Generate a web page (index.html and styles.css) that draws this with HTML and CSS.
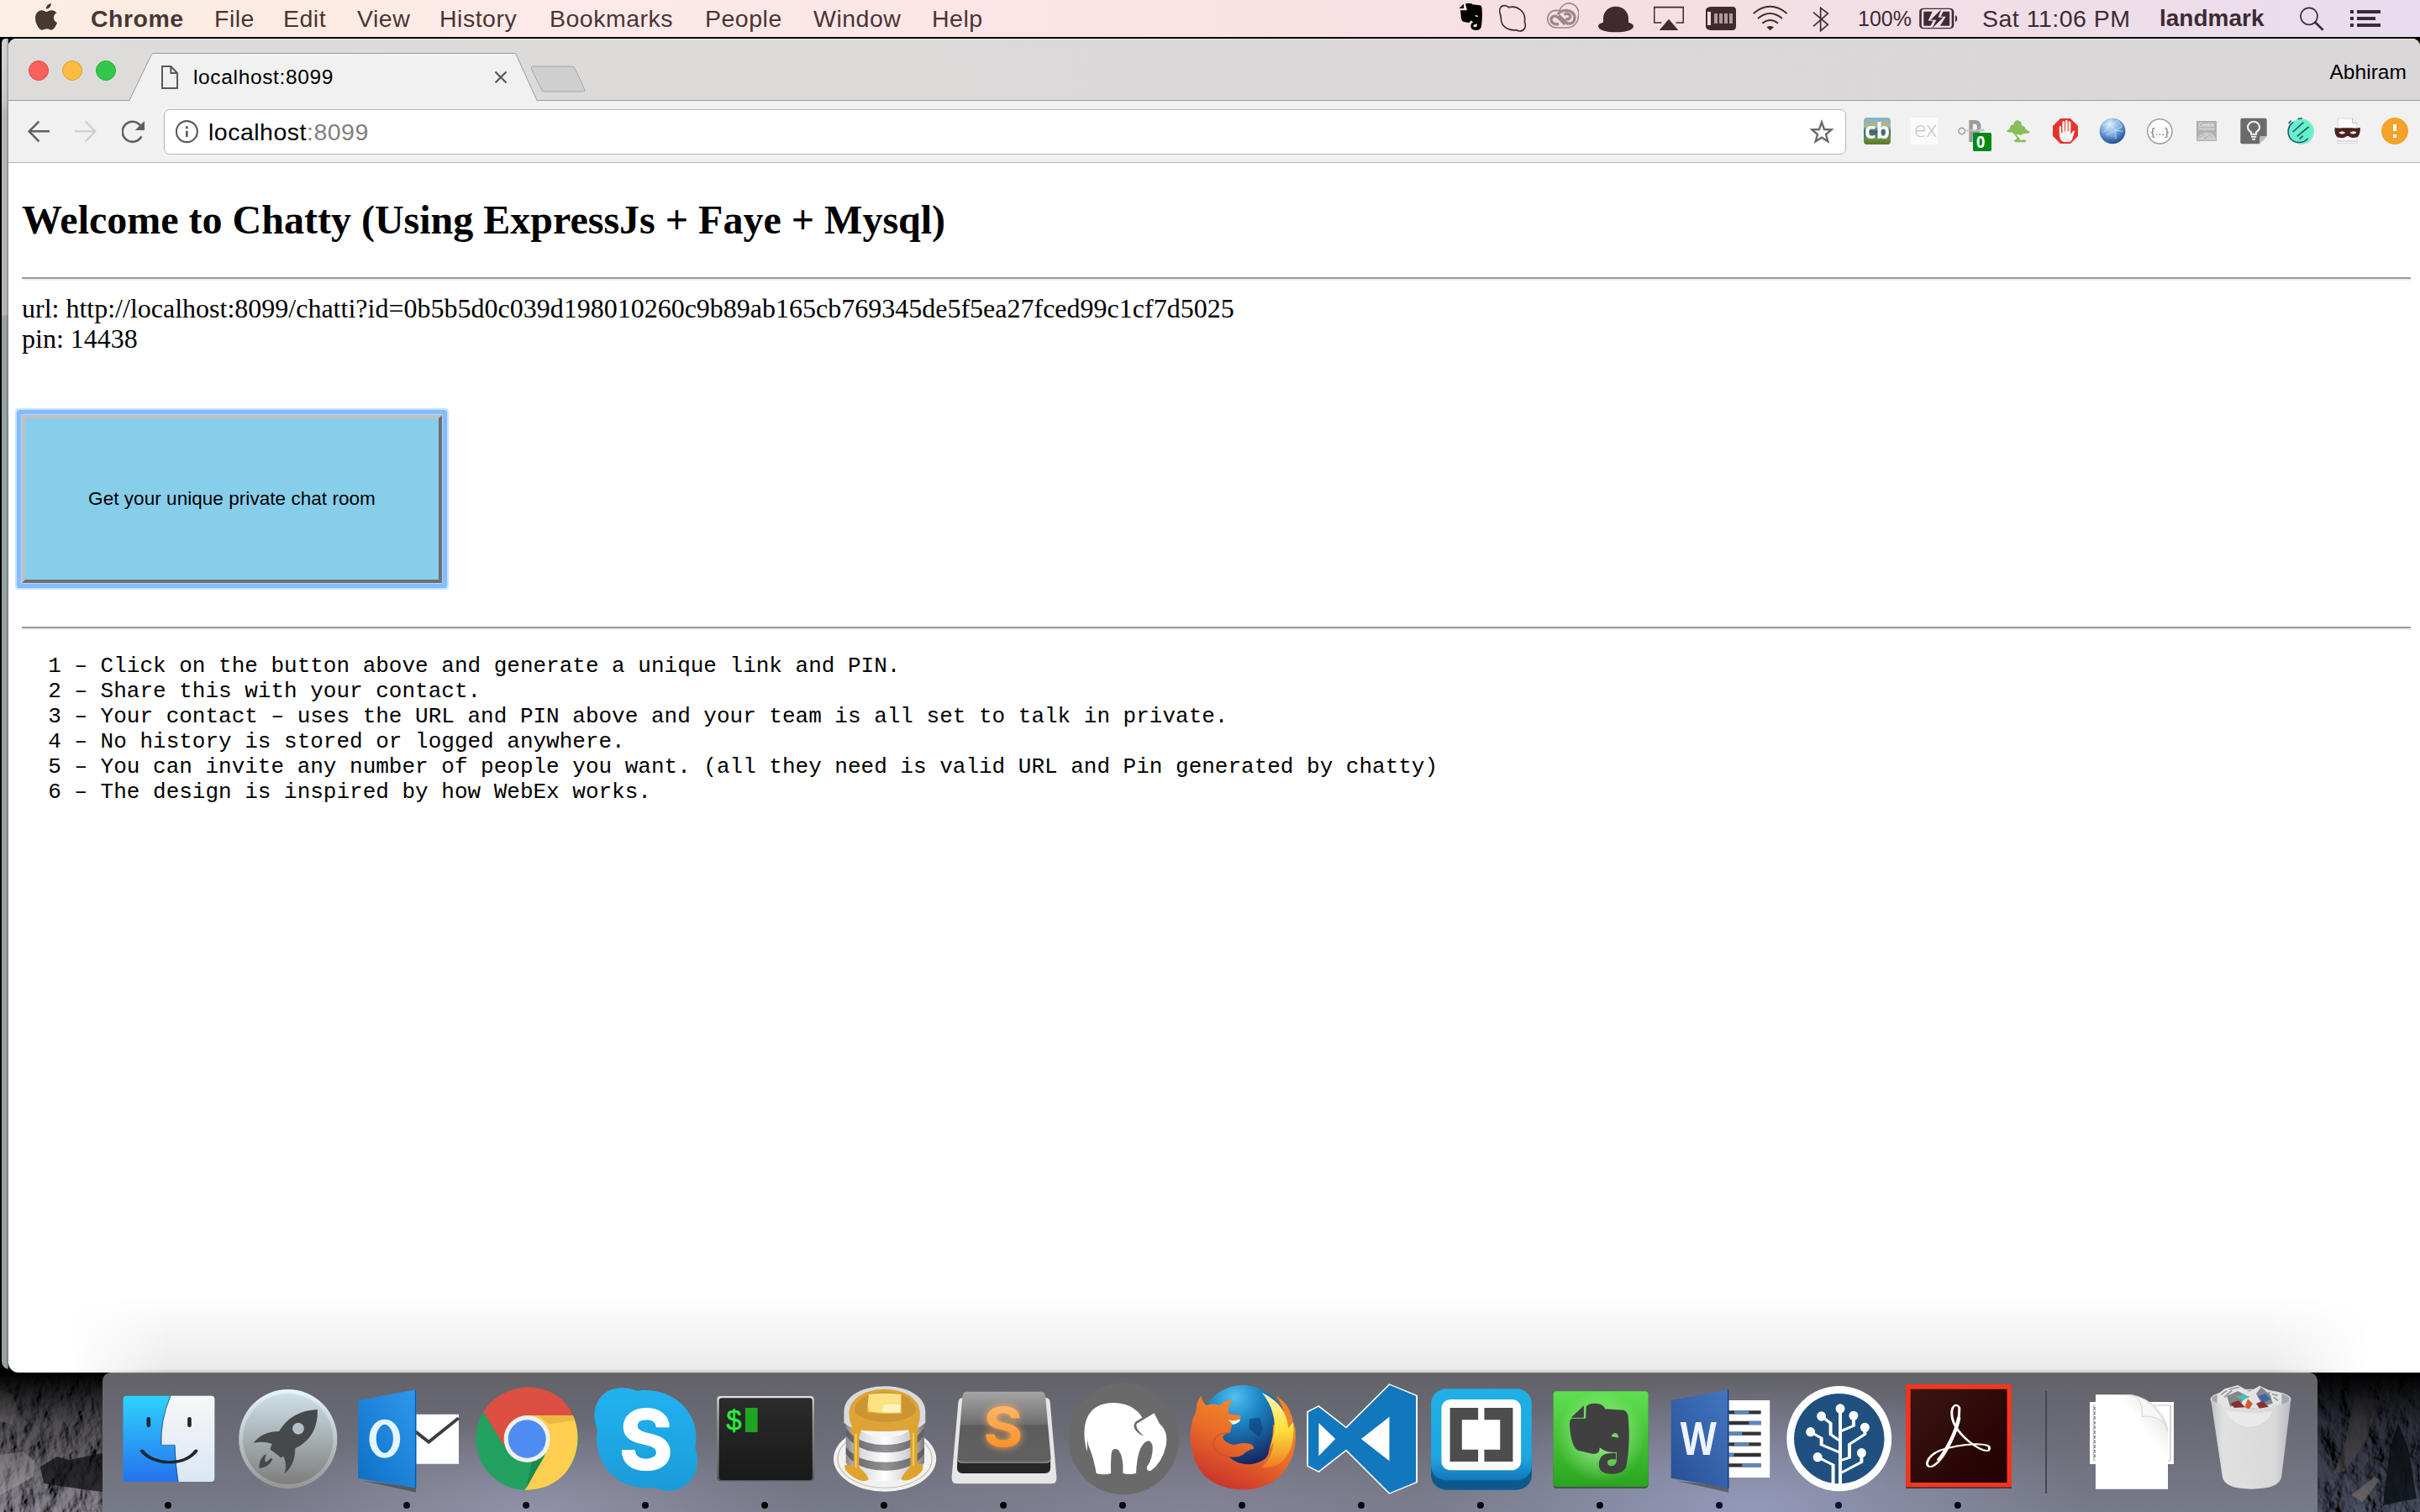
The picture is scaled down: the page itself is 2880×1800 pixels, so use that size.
FILE: index.html
```html
<!DOCTYPE html>
<html lang="en">
<head>
<meta charset="utf-8">
<title>localhost:8099</title>
<link rel="stylesheet" href="styles.css">
</head>
<body>
<div class="desktop">
  <header class="menubar">
    <nav class="menus">
      <svg class="mb-icon" width="26" height="44" viewBox="126 0 78 132"><path fill="#48392f" d="M182 12c2 10-7 20-17 20-2-9 7-18 17-20zM166 42c5 0 10-5 18-5 7 0 14 4 18 9-15 8-13 29 2 35-3 9-12 26-21 26-6 0-9-4-16-4s-11 4-16 4c-12 0-25-24-25-42 0-17 11-28 23-28 7 0 12 5 17 5z"/></svg>
      <b>Chrome</b><span>File</span><span>Edit</span><span>View</span><span>History</span><span>Bookmarks</span><span>People</span><span>Window</span><span>Help</span>
    </nav>
    <div class="status">
      <svg class="mb-icon" width="28" height="44" viewBox="48 0 84 132"><path d="M66 14v16H49zM72 14q2-3 12-2 12 0 13 4l26 3q8 1 8 14 2 30-2 60-2 14-16 15-22 1-22-14 0-15 14-15h8v8h-8q-5 1-5 6 0 4 7 4 6 0 7-8v-8q-14 3-22-8-4 11-14 7l-14-3q-6-2-8-18l-2-22h24z"/><path d="M106 58q3-8 11 0v3z" fill="#f6dfe3"/></svg>
      <svg class="mb-icon" width="32" height="44" viewBox="192 0 96 132"><path fill="none" stroke="#43292d" stroke-width="5" d="M196 49c-7-16 3-30 17-29 6 0 9 3 13 6 30-8 60 14 58 45l-1 7c8 18-2 33-16 33-6 0-9-1-13-4-30 4-55-12-55-42z"/></svg>
      <svg class="mb-icon" width="38" height="44" viewBox="363 0 114 132"><g fill="none" stroke="#9e8589"><path stroke-width="5" d="M408 38a35 37 0 0 1 67 22c-1 22-17 39-42 39h-38c-40-4-39-60 0-62z"/><path stroke-width="10" stroke-linejoin="round" d="M428 87l-26-25c-10-10-25-2-24 9 2 14 14 16 27 15M402 52c14-22 60-20 60 12 0 16-12 22-26 20l-30-28M424 52c12-8 24 0 22 9-2 9-10 9-16 6"/></g></svg>
      <svg class="mb-icon" width="42" height="44" viewBox="546 0 126 132"><path fill="#402a2d" d="M564 80V66c0-25 20-43 45-43s45 18 45 43v14c10 2 18 7 18 13 0 15-28 22-63 22s-63-7-63-22c0-6 8-11 18-13z"/></svg>
      <svg class="mb-icon" width="36" height="44" viewBox="744 0 108 132"><path fill="none" stroke="#402a2d" stroke-width="5" d="M772 81h-26V26h104v55h-26"/><path fill="#402a2d" d="M798 68l34 40h-68z"/></svg>
      <svg class="mb-icon" width="36" height="44" viewBox="930 0 108 132"><path fill="#402a2d" d="M948 24h78q12 0 12 14v56q0 14-12 14h-78q-18-2-18-14V38q0-12 18-14z"/><path fill="#f5dfe4" d="M936 42h12v48h-12z"/><path fill="#ae999d" d="M960 48h12v36h-12zM978 48h12v36h-12zM996 48h12v36h-12zM1014 48h12v36h-12z"/></svg>
      <svg class="mb-icon" width="42" height="44" viewBox="1099 0 126 132"><g fill="none" stroke="#402a2d" stroke-width="6"><path d="M1101 48q60-49 120 0M1117 66q43-36 87 0M1133 83q28-22 56 0"/></g><path fill="#402a2d" d="M1148 97q13-8 26 0l-13 12z"/></svg>
      <svg class="mb-icon" width="20" height="44" viewBox="1311 0 60 132"><path fill="none" stroke="#402a2d" stroke-width="5" d="M1314 44l52 44-26 22V28l26 20-52 46"/></svg>
      <span class="battery-text">100%</span>
      <svg class="mb-icon" width="46" height="44" viewBox="777 0 61 132" preserveAspectRatio="none"><rect x="779" y="31" width="51" height="70" rx="5" ry="10" fill="none" stroke="#3f2b33" stroke-width="3.500"/><g fill="#3f2b33"><path d="M784 41h14l-7 33h8l-4 18h-11zM815 41h10v51h-15l9-33h-8z"/><path d="M812 33l-17 38h9l-7 31 18-40h-8z"/><path d="M834 54q3 3 3 12t-3 13z"/></g></svg>
      <span>Sat 11:06 PM</span>
      <b class="user">landmark</b>
      <svg class="mb-icon" width="29" height="44" viewBox="1134 0 87 132"><circle cx="1167" cy="58" r="30" fill="none" stroke="#3c2a36" stroke-width="5"/><path d="M1187 78l30 29" stroke="#3c2a36" stroke-width="8"/></svg>
      <svg class="mb-icon" width="36" height="44" viewBox="1314 0 108 132"><path fill="#3c2a36" d="M1314 36h12v12h-12zM1338 36h84v12h-84zM1314 60h12v12h-12zM1338 60h66v12h-66zM1314 84h12v12h-12zM1338 84h84v12h-84z"/></svg>
    </div>
  </header>

  <main class="workspace">
    <div class="behind"></div>
    <section class="window">
      <div class="tabstrip">
        <div class="lights"><i class="close"></i><i class="min"></i><i class="max"></i></div>
        <div class="tab">
          <svg class="tab-shape" width="486" height="74" viewBox="0 0 486 74"><path d="M0 74L26 19.500Q27 17.500 29 17.500H457.500Q459.500 17.500 460.500 19.500L485 74z" fill="#f1f1f1"/><path d="M0 73.500L26 19.500Q27 17.500 29 17.500H457.500Q459.500 17.500 460.500 19.500L485 73.500" fill="none" stroke="#9b9a9a"/></svg>
          <svg class="doc" width="20" height="28" viewBox="576 234 60 84"><path d="M579 237h31l23 24v54h-54zM610 237v24h23" fill="none" stroke="#5a5a5a" stroke-width="6"/></svg>
          <span class="tab-title">localhost:8099</span>
          <svg class="x" width="16" height="16" viewBox="0 0 16 16"><path d="M1.500 1.500l13 13m0-13l-13 13" stroke="#5a5a5a" stroke-width="2.300"/></svg>
        </div>
        <svg class="newtab" width="68" height="34" viewBox="0 0 68 34"><path d="M4 1h45q3 0 4.500 3l11 24q1.500 3-2 3H17q-3 0-4-3L1.500 4q-1-3 2.500-3z" fill="#d0cfcf" stroke="#a3a2a2"/></svg>
        <span class="profile">Abhiram</span>
      </div>
      <div class="toolbar">
        <svg width="28" height="28" viewBox="99 426 84 84"><path d="M177 466h-73M139 431l-35 35 35 36" fill="none" stroke="#5f5f5f" stroke-width="7.500"/></svg>
        <svg width="28" height="28" viewBox="267 426 84 84"><path d="M267 466h73M305 431l35 35-35 36" fill="none" stroke="#d2d2d2" stroke-width="7.500"/></svg>
        <svg width="28" height="28" viewBox="435 426 84 84"><path d="M505 484a36 36 0 1 1-1-35" fill="none" stroke="#5f5f5f" stroke-width="8"/><path d="M516 429v33h-34z" fill="#5f5f5f"/></svg>
        <div class="omnibox">
          <svg width="28" height="28" viewBox="627 428 84 84"><circle cx="667" cy="469" r="37.500" fill="none" stroke="#5a5a5a" stroke-width="6.500"/><path d="M663 450h8v9h-8zM663 466h8v22h-8z" fill="#5a5a5a"/></svg>
          <span class="url">localhost<span>:8099</span></span>
          <svg class="star" width="30" height="30" viewBox="1299 424 90 90"><path d="M1344 434l9 26 26 1-20 17 7 25-22-14-22 14 7-25-20-17 26-1z" fill="none" stroke="#6a6a6a" stroke-width="7"/></svg>
        </div>
        <div class="extensions">
          <svg viewBox="84 90 96 96"><defs><linearGradient id="cb" x2="0" y2="1"><stop offset="0" stop-color="#7fb4cf"/><stop offset=".35" stop-color="#a3b7a0"/><stop offset=".5" stop-color="#3f5e74"/><stop offset=".8" stop-color="#6d9040"/><stop offset="1" stop-color="#52762c"/></linearGradient></defs><rect x="84" y="90" width="96" height="96" rx="12" fill="url(#cb)"/><path d="M96 108h30l-8 9zM144 112l14-10 14 11z" fill="#e4a640"/><text x="87" y="166" font-size="80" textLength="90" lengthAdjust="spacingAndGlyphs" class="glyph-bold" fill="#f4fbff">cb</text></svg>
          <svg viewBox="252 90 96 96"><path fill="#fbfbfb" d="M252 90h96v96h-96z"/><text x="264" y="158" font-size="78" textLength="82" lengthAdjust="spacingAndGlyphs" class="glyph-light" fill="#c4c6c8">ex</text></svg>
          <svg viewBox="420 90 96 96"><text x="452" y="177" font-size="106" textLength="54" lengthAdjust="spacingAndGlyphs" class="glyph-bold" fill="#9b9b9b">P</text><circle cx="434" cy="138" r="11" fill="#f1f1f1" stroke="#a4a4a4" stroke-width="5"/><path d="M445 136h70M499 136v-6M511 136v-6" stroke="#c4c4c4" stroke-width="5"/><rect x="474" y="144" width="66" height="66" rx="5" fill="#008a16"/><text x="486" y="198" font-size="57" textLength="31" lengthAdjust="spacingAndGlyphs" class="glyph-bold" fill="#fff">0</text></svg>
          <svg viewBox="78 420 96 96"><path fill="#88bd59" d="M83 468l12-8 4-12 10-3 3-9 10-8 14 8 1 10 12 8 3 8 15 8-5 6-18 1-8 6-12-4-5 3 12 12v7l17-2 6 3-2 6h-38l-4-6 10-5-1-8-8-10-6-6-16-1z"/></svg>
          <svg viewBox="246 420 96 96"><path d="M276 423h36l27 27v36l-27 27h-36l-27-27v-36z" fill="#e8332d"/><path d="M272 452q4-6 7 0v22h4v-39q4-6 8 0v34h3v-38q4-6 8 0v38h3v-33q4-6 8 0v44l8-12q6-4 6 2l-9 28q-4 9-13 9h-14q-12-1-16-12-3-7-3-43z" fill="#fdf5f3"/></svg>
          <svg viewBox="414 420 96 96"><defs><radialGradient id="globe" cx=".4" cy=".25" r=".85"><stop offset="0" stop-color="#e9f5ff"/><stop offset=".4" stop-color="#81aee0"/><stop offset=".75" stop-color="#3669ad"/><stop offset="1" stop-color="#183d78"/></radialGradient></defs><circle cx="462" cy="468" r="46" fill="url(#globe)"/><path d="M426 444l30 3 26-17 14 23-23 13-17-19M428 473l28-26 17 19 27 3M440 482l33-16 2 30" stroke="#d3e8fb" stroke-width="2" fill="#acd0f44c"/></svg>
          <svg viewBox="582 420 96 96"><circle cx="631" cy="469" r="44" fill="#fff" stroke="#9c9c9c" stroke-width="4.500"/><text x="599" y="482" font-size="38" textLength="64" lengthAdjust="spacingAndGlyphs" class="glyph" fill="#707070">{...}</text></svg>
          <svg viewBox="750 420 96 96"><path fill="#b0b0b0" d="M762 432h72v72h-72z"/><text x="770" y="452" font-size="19" textLength="56" lengthAdjust="spacingAndGlyphs" class="glyph-bold" fill="#e9e9e9">Cookie</text><text x="769" y="466" font-size="14" textLength="58" lengthAdjust="spacingAndGlyphs" class="glyph-bold" fill="#dedede">Inspector</text><path d="M765 500l7-17 20-10 22 2 17 17v8z" fill="#d0d0d0"/><path d="M772 492l20-13M788 496l18-11M805 480l15 11" stroke="#aaa" stroke-width="3"/></svg>
          <svg viewBox="918 420 96 96"><path d="M925 422h82q6 0 6 6v58l-28 28h-60q-6 0-6-6v-80q0-6 6-6z" fill="#6b6b6b"/><path d="M1013 486v2l-26 26v-22q0-6 6-6z" fill="#bcbcbc"/><path d="M957 479v-7q-12-8-12-17a21 21 0 0 1 42 0q0 9-12 17v7zM957 488h19M961 497h11" fill="none" stroke="#f4f4f4" stroke-width="6"/></svg>
          <svg viewBox="1086 420 96 96"><circle cx="1136" cy="470" r="44" fill="#63f2c9" stroke="#8ce9d0" stroke-width="4"/><path d="M1108 436q-22 14-18 42 4 22 26 29 28 6 44-13M1124 424l16-1M1091 441l9-10M1106 471l38-34M1121 487l42-34M1130 497l12-12" fill="none" stroke="#2f5570" stroke-width="5"/></svg>
          <svg viewBox="1254 420 96 96"><path d="M1267 423h52l16 16v73h-68z" fill="#fbfbfb" stroke="#c9c9c9" stroke-width="2"/><path d="M1319 423v16h16M1268 504h66" fill="none" stroke="#b4bcb6" stroke-width="3"/><path d="M1256 456q14 3 28 1h34q15 2 28-2 3 20-8 34-22 8-34-3h-5q-14 11-34 4-12-12-9-34z" fill="#4a211f"/><path d="M1269 474q13-10 25 0-12 11-25 0zM1309 474q12-10 25-1-12 11-25 1z" fill="#f3eaea"/></svg>
          <svg viewBox="1422 420 96 96"><circle cx="1470" cy="468" r="48" fill="#f4a228"/><path d="M1464 444h12v24h-12zM1464 480h12v12h-12z" fill="#fff"/></svg>
        </div>
      </div>
      <article class="page">
        <h1>Welcome to Chatty (Using ExpressJs + Faye + Mysql)</h1>
        <hr>
        <p>url: http://localhost:8099/chatti?id=0b5b5d0c039d198010260c9b89ab165cb769345de5f5ea27fced99c1cf7d5025<br>pin: 14438</p>
        <button class="room" type="button">Get your unique private chat room</button>
        <hr>
<pre>  1 – Click on the button above and generate a unique link and PIN.
  2 – Share this with your contact.
  3 – Your contact – uses the URL and PIN above and your team is all set to talk in private.
  4 – No history is stored or logged anywhere.
  5 – You can invite any number of people you want. (all they need is valid URL and Pin generated by chatty)
  6 – The design is inspired by how WebEx works.</pre>
      </article>
      <div class="dock-shadow"></div>
    </section>
  </main>

  <footer class="dock-area">
    <svg class="rock" width="122" height="166" viewBox="0 0 122 166">
      <defs>
        <filter id="rough" x="0" y="0" width="1" height="1"><feTurbulence type="fractalNoise" baseFrequency=".045 .03" numOctaves="4" seed="8"/><feDiffuseLighting surfaceScale="8" lighting-color="#a09ca8"><feDistantLight azimuth="200" elevation="38"/></feDiffuseLighting></filter>
        <linearGradient id="fade" x2="0" y2="1"><stop offset="0" stop-color="#000"/><stop offset=".35" stop-color="#000" stop-opacity=".5"/><stop offset="1" stop-color="#000" stop-opacity=".1"/></linearGradient>
      </defs>
      <rect width="122" height="166" filter="url(#rough)"/>
      <path d="M0 20l16 6 5 20-5 16-16-4zM0 98l28-4 14 12-2 18-22 12-18 10z" fill="#c9c4c8" opacity=".6"/>
      <path d="M48 112l20-12 14 4 40-8v46l-30-4-40-6z" fill="#161617" opacity=".75"/>
      <rect width="122" height="166" fill="url(#fade)"/>
    </svg>
    <div class="dock">
      <!-- Finder -->
      <svg class="app" viewBox="280.900 102 309.250 498" preserveAspectRatio="none"><defs><linearGradient id="fa" x2="0" y2="1"><stop offset="0" stop-color="#2fd3fd"/><stop offset="1" stop-color="#2472ee"/></linearGradient><linearGradient id="fb" x2="0" y2="1"><stop offset="0" stop-color="#f7f7f8"/><stop offset="1" stop-color="#dae7f3"/></linearGradient></defs><rect x="319" y="185" width="237" height="307" rx="9" ry="12" fill="url(#fa)"/><path d="M442 185h105q9 0 9 12v283q0 12-9 12h-85q-6-60-9-129h-35q-3-90 24-178z" fill="url(#fb)"/><path d="M442 185q-27 88-24 176h35q2 80 9 131" fill="none" stroke="#19406b" stroke-width="2"/><path d="M385 266v26M491 266v26M368 382c30 52 110 56 140 0" fill="none" stroke="#20252c" stroke-width="10" stroke-linecap="round"/><ellipse cx="435.500" cy="576" rx="8.700" ry="12" fill="#000"/></svg>
      <!-- Launchpad -->
      <svg class="app" viewBox="590.200 102 309.250 498" preserveAspectRatio="none"><defs><linearGradient id="la" x2="0" y2="1"><stop offset="0" stop-color="#cfe0e8"/><stop offset="1" stop-color="#7e7e7c"/></linearGradient><linearGradient id="lb" x2="0" y2="1"><stop offset="0" stop-color="#e5f6fd"/><stop offset="1" stop-color="#969694"/></linearGradient></defs><ellipse cx="746.500" cy="339" rx="127.500" ry="177" fill="url(#lb)"/><ellipse cx="746.500" cy="339" rx="117" ry="162" fill="url(#la)"/><path d="M823 234q-68 4-100 78-46 2-66 42 25-8 48 2l-5 20 28 30 7-5q10 32 2 62 28-30 28-90 60-40 58-139z" fill="#46494b"/><ellipse cx="773" cy="302" rx="15" ry="21" fill="#b4c0c6"/><path d="M690 392q-18 12-19 52 24 0 36-33l-5-3-12 14-4-8z" fill="#46494b"/></svg>
      <!-- Outlook -->
      <svg class="app" viewBox="899.400 102 309.250 498" preserveAspectRatio="none"><defs><linearGradient id="oa" x1="1" x2="0" y2="1"><stop offset="0" stop-color="#2e99ee"/><stop offset="1" stop-color="#0d6fc4"/></linearGradient></defs><path d="M1060 251h129v177h-129z" fill="#fff"/><path d="M1076 312l35 38 78-86" fill="none" stroke="#3d3d3d" stroke-width="10"/><path d="M940 488l138 42v-20z" fill="#444a" /><path d="M928 201l151-38v352l-151-36z" fill="url(#oa)"/><path d="M1077 163v352" stroke="#0b59a5" stroke-width="3"/><ellipse cx="997" cy="338" rx="31" ry="60" fill="none" stroke="#e2f6ff" stroke-width="18"/><ellipse cx="1054" cy="576" rx="8.700" ry="12" fill="#0c0d17"/></svg>
      <!-- Chrome -->
      <svg class="app" viewBox="1208.700 102 309.250 498" preserveAspectRatio="none"><ellipse cx="1366" cy="339" rx="132.500" ry="183.500" fill="#23a160"/><path d="M1366 255h119c34 100 0 267-125 267l50-118q30-90-44-149z" fill="#fecf50"/><path d="M1253 243c50-117 190-122 232 12h-119q-52 6-60 84l2 28z" fill="#dd4e43"/><path d="M1380 412l28-8-44 112z" fill="#157a42" opacity=".6"/><path d="M1396 256h89l2 18-64 12z" fill="#e0a93a" opacity=".6"/><ellipse cx="1366" cy="339" rx="60" ry="84" fill="#f1f1f1"/><ellipse cx="1366" cy="339" rx="49" ry="68" fill="#4f8df3"/><ellipse cx="1363.500" cy="576" rx="8.700" ry="12" fill="#0c0d17"/></svg>
      <!-- Skype -->
      <svg class="app" viewBox="-6.500 102 309.250 498" preserveAspectRatio="none"><defs><linearGradient id="sk" x2="0" y2="1"><stop offset="0" stop-color="#22b2f1"/><stop offset="1" stop-color="#1b9cd8"/></linearGradient></defs><path d="M24 308C-2 220 40 125 127 167c96-16 168 84 150 204 26 90-32 188-104 142-96 14-162-80-149-205z" fill="url(#sk)"/><text transform="translate(80 446) scale(2.178 3)" font-size="98" textLength="64" lengthAdjust="spacingAndGlyphs" class="glyph-round" fill="#fff" stroke="#fff" stroke-width="2" stroke-linejoin="round">S</text><ellipse cx="148" cy="576" rx="8.700" ry="12" fill="#05060f"/></svg>
      <!-- Terminal -->
      <svg class="app" viewBox="302.700 102 309.250 498" preserveAspectRatio="none"><defs><linearGradient id="te" x2="0" y2="1"><stop offset="0" stop-color="#2b2b2b"/><stop offset="1" stop-color="#191919"/></linearGradient><linearGradient id="tb" x2="0" y2="1"><stop offset="0" stop-color="#e2e2e2"/><stop offset=".3" stop-color="#999"/><stop offset="1" stop-color="#555"/></linearGradient></defs><rect x="334" y="186" width="251" height="304" rx="9" ry="12" fill="url(#tb)"/><rect x="339" y="193" width="242" height="293" rx="7" ry="9" fill="url(#te)"/><text transform="translate(358 306) scale(2.178 3)" font-size="33" textLength="18" lengthAdjust="spacingAndGlyphs" class="glyph" fill="#28f03a" stroke="#28f03a" stroke-width=".6">$</text><path d="M407 228h32v87h-32z" fill="#20a523"/><ellipse cx="457.500" cy="576" rx="8.700" ry="12" fill="#000"/></svg>
      <!-- Sequel Pro -->
      <svg class="app" viewBox="612 102 309.250 498" preserveAspectRatio="none"><defs><linearGradient id="me"><stop offset="0" stop-color="#8a8a8c"/><stop offset=".2" stop-color="#dcdcde"/><stop offset=".5" stop-color="#fff"/><stop offset=".8" stop-color="#d0d0d3"/><stop offset="1" stop-color="#7c7c7e"/></linearGradient><linearGradient id="mb"><stop offset="0" stop-color="#5f5f62"/><stop offset=".5" stop-color="#929296"/><stop offset="1" stop-color="#5f5f62"/></linearGradient></defs><ellipse cx="769" cy="410" rx="133" ry="117" fill="#f1f1f1"/><ellipse cx="769" cy="410" rx="122" ry="104" fill="none" stroke="#c6bda9" stroke-width="3"/><path d="M668 240h203v184q-26 66-101 66t-102-66z" fill="url(#me)"/><path d="M668 300q30 60 101 60t102-60v26q-30 62-102 62t-101-62zM668 368q30 54 101 54t102-54v24q-30 60-102 60t-101-60z" fill="url(#mb)"/><path d="M663 242c0-122 211-122 211 0v40q-40 44-105 44t-106-44z" fill="#d9dade"/><path d="M707 310q62-14 124 0-22 24-62 24t-62-24z" fill="#f6f6f8"/><path d="M676 250c0-118 184-118 184 0 0 24-4 40-8 52-52 12-120 14-164 2-8-18-12-34-12-54z" fill="#dca535"/><path d="M690 236c6-86 152-86 160 0-14 56-144 56-160 0z" fill="#cc9531"/><path d="M680 296h26v20q-4 8-4 20v104q26 30 24 46-20 12-48-20-18-22-12-34 12-4 22 8V330q-8-16-8-34zM828 296h27l-2 34v100q6-4 14 0 6 28-26 50-22 14-30 2 4-16 24-44V336q-2-24-7-40z" fill="#e0a32c"/><path d="M694 320v122M843 318v116" stroke="#f6cf68" stroke-width="4"/><path d="M727 180q40-8 84 0v66q-44 6-88-4z" fill="#fbe384"/><path d="M766 216h43l1 29-48-1z" fill="#fff4c0"/><path d="M725 226v16q42 9 86 4v-12" fill="none" stroke="#e3ba3f" stroke-width="4"/><ellipse cx="766.500" cy="576" rx="8.700" ry="12" fill="#000"/></svg>
      <!-- Sublime Text -->
      <svg class="app" viewBox="921.200 102 309.250 498" preserveAspectRatio="none"><defs><linearGradient id="su" x2="0" y2="1"><stop offset="0" stop-color="#a5a5a5"/><stop offset=".46" stop-color="#6e6e6e"/><stop offset=".47" stop-color="#5c5c5c"/><stop offset="1" stop-color="#616161"/></linearGradient><linearGradient id="ss" x2="0" y2="1"><stop offset="0" stop-color="#ffc279"/><stop offset="1" stop-color="#ff8614"/></linearGradient></defs><path d="M970 192h214q12 0 13 14l17 272q0 21-12 21H954q-12 0-12-21l17-268q1-18 11-18z" fill="#e6e6e6"/><path d="M957 410h241v32q0 20-14 20H970q-14 0-14-20z" fill="#262626"/><path d="M982 170h190q12 0 13 16l14 220q0 20-14 20H970q-14 0-13-20l13-220q1-16 12-16z" fill="url(#su)"/><path d="M958 414q3 9 12 9h215q10 0 13-9" fill="none" stroke="#999" stroke-width="3"/><text transform="translate(1024 367) scale(2.178 3)" font-size="65" textLength="47" lengthAdjust="spacingAndGlyphs" class="glyph-round glow" fill="url(#ss)">S</text><ellipse cx="1076" cy="576" rx="8.700" ry="12" fill="#000"/></svg>
      <!-- MAMP -->
      <svg class="app" viewBox="1230.500 102 309.250 498" preserveAspectRatio="none"><ellipse cx="1388" cy="339" rx="143" ry="199" fill="#6a6a6a"/><path d="M1293 384c-12-60-18-176 72-174 40 2 62 30 71 53l-18 15q-8 18 2 32 8 14 20 18-24-28-18-44l45-37 14 38q24 28 16 82-10 58-39 86-12 2-10-14 16-30 15-70-3-28-15-22-25 16-28 115-18 6-34 0 2-60-12-84-16-10-18 14-2 30-1 70-18 8-38 0-6-50-17-88-6-16-6-40z" fill="#fff"/><ellipse cx="1385" cy="576" rx="8.700" ry="12" fill="#03040f"/></svg>
      <!-- Firefox -->
      <svg class="app" viewBox="15.200 102 309.250 498" preserveAspectRatio="none"><defs><radialGradient id="fg" cx=".4" cy=".15" r=".9"><stop offset="0" stop-color="#52bff0"/><stop offset=".35" stop-color="#1a86c7"/><stop offset="1" stop-color="#171c54"/></radialGradient><linearGradient id="ff" x1=".7" y1="0" x2=".2" y2="1"><stop offset="0" stop-color="#f6952c"/><stop offset=".5" stop-color="#e96a29"/><stop offset="1" stop-color="#c82c2c"/></linearGradient><linearGradient id="fy" x2="0" y2="1"><stop offset="0" stop-color="#fff6b8"/><stop offset=".5" stop-color="#fee037"/><stop offset="1" stop-color="#ef7c25"/></linearGradient></defs><ellipse cx="172" cy="290" rx="108" ry="143" fill="url(#fg)"/><path d="M190 268l26-5 8 40-10 28-26-28z" fill="#0c3c78" opacity=".6"/><path d="M64 185Q67 209 78 219Q96 209 112 219Q124 201 148 199Q130 223 136 249L167 255Q167 275 145 283L139 317Q122 320 120 332Q122 352 150 360Q172 350 190 356Q202 362 200 374Q184 378 172 396Q158 408 136 402Q160 436 200 428Q236 420 240 380Q252 330 250 290L290 270L308 300Q316 400 270 470Q220 530 150 518Q60 500 42 390Q28 320 46 256Q52 240 52 226Q53 204 64 185z" fill="url(#ff)"/><path d="M139 317Q98 316 96 356Q98 394 136 402" fill="none" stroke="#c9501f" stroke-width="3"/><path d="M258 186Q300 215 306 310L286 350Q290 240 258 186z" fill="#ef8429"/><path d="M222 174Q285 215 290 300L303 280Q308 360 284 405Q262 446 222 440Q250 400 252 350L240 376Q262 300 250 250Q245 215 222 174z" fill="url(#fy)"/><path d="M134 270q14 8 32-2-2 16-20 20z" fill="#fff3e4"/><ellipse cx="170" cy="576" rx="8.700" ry="12" fill="#05060f"/></svg>
      <!-- VS Code -->
      <svg class="app" viewBox="324.500 102 309.250 498" preserveAspectRatio="none"><path d="M340 242l29-20 71 76 112-154 71 40v310l-71 40-112-154-71 76-29-20z" fill="#1278bd" stroke="#fff" stroke-width="4"/><path d="M369 282l43 57-43 61zM552 260v158l-73-79z" fill="#fff"/><ellipse cx="479" cy="576" rx="8.700" ry="12" fill="#05060f"/></svg>
      <!-- Brackets -->
      <svg class="app" viewBox="633.700 102 309.250 498" preserveAspectRatio="none"><defs><linearGradient id="br" x2="0" y2="1"><stop offset="0" stop-color="#1fb0e6"/><stop offset=".75" stop-color="#1fa6df"/><stop offset="1" stop-color="#1276bb"/></linearGradient></defs><rect x="660" y="180" width="261" height="341" rx="40" ry="52" fill="#0b5a8d"/><rect x="660" y="160" width="261" height="327" rx="40" ry="52" fill="url(#br)"/><rect x="687" y="198" width="206" height="253" rx="24" ry="32" fill="#fff"/><path d="M709 228h73v43h-42v106h42v43h-73zM798 228h74v192h-74v-43h41V271h-41z" fill="#4d4d4d"/><ellipse cx="788" cy="576" rx="8.700" ry="12" fill="#05060f"/></svg>
      <!-- Evernote -->
      <svg class="app" viewBox="943 102 309.250 498" preserveAspectRatio="none"><defs><radialGradient id="eg"><stop offset="0" stop-color="#a6ef97"/><stop offset="1" stop-color="#a6ef97" stop-opacity="0"/></radialGradient><linearGradient id="ev" x2="0" y2="1"><stop offset="0" stop-color="#5fe04f"/><stop offset="1" stop-color="#2aa41f"/></linearGradient></defs><rect x="977" y="174" width="246" height="342" rx="9" ry="12" fill="#3e5c44"/><rect x="977" y="169" width="246" height="340" rx="9" ry="12" fill="url(#ev)"/><ellipse cx="1100" cy="330" rx="115" ry="165" fill="url(#eg)"/><path d="M1056 220v43h-33zM1062 224q4-12 24-12 20 0 25 20l48 4q10 4 12 24 6 90-4 170-4 34-36 34-36 2-36-34 0-40 34-40h10v22h-12q-10 2-10 12 0 12 12 12 12-2 12-22v-28q-26 4-44-16 0 26-18 22l-38-12q-18-12-22-92 0-22 8-22h34z" fill="#404040"/><path d="M1127 330q4-12 12-12 6 4 7 17z" fill="#76d767"/><ellipse cx="1097.500" cy="576" rx="8.700" ry="12" fill="#000"/></svg>
      <!-- Word -->
      <svg class="app" viewBox="1252.200 102 309.250 498" preserveAspectRatio="none"><defs><linearGradient id="wa" x1="1" x2="0" y2="1"><stop offset="0" stop-color="#4476c1"/><stop offset="1" stop-color="#264f94"/></linearGradient></defs><path d="M1400 201h138v276h-138z" fill="#fff"/><path d="M1425 244h90M1425 282h90M1425 320h90M1425 358h90M1425 396h90M1425 433h90" stroke="#333" stroke-width="13"/><path d="M1446 244h38M1484 282h31M1425 320h41M1446 358h38M1425 396h20M1466 433h49" stroke="#5f86bd" stroke-width="13"/><path d="M1295 488l136 42v-20z" fill="#444a"/><path d="M1282 201l150-38v352l-150-36z" fill="url(#wa)"/><path d="M1430 163v352" stroke="#183f80" stroke-width="3"/><text transform="translate(1306 396) scale(2.178 3)" font-size="53" textLength="43" lengthAdjust="spacingAndGlyphs" class="glyph-bold" fill="#edf3ff">W</text><ellipse cx="1407" cy="576" rx="8.700" ry="12" fill="#0b0f20"/></svg>
      <!-- SourceTree -->
      <svg class="app" viewBox="34.200 102 285.500 498" preserveAspectRatio="none"><ellipse cx="178.500" cy="338" rx="125.500" ry="188" fill="#fff"/><ellipse cx="178.500" cy="338" rx="108" ry="161" fill="#20507f"/><g fill="none" stroke="#fff" stroke-width="8"><path d="M181 230v270M136 258l22 25v40l23 24M213 256v36l-32 20M110 314l26 22v24l45 28M240 298v24l-37 36v48l-22 10M127 404l37 28v66M232 388v34l-51 40"/></g><g fill="#fff"><ellipse cx="181" cy="231" rx="11" ry="17"/><ellipse cx="136" cy="258" rx="11" ry="17"/><ellipse cx="213" cy="256" rx="11" ry="17"/><ellipse cx="110" cy="314" rx="11" ry="17"/><ellipse cx="240" cy="298" rx="11" ry="17"/><ellipse cx="127" cy="404" rx="11" ry="17"/><ellipse cx="232" cy="389" rx="11" ry="17"/></g><ellipse cx="177" cy="576" rx="8" ry="12" fill="#0b1230"/></svg>
      <!-- Acrobat -->
      <svg class="app" viewBox="319.600 102 285.500 498" preserveAspectRatio="none"><defs><linearGradient id="ac" x2="1" y2="1"><stop offset="0" stop-color="#3a1513"/><stop offset="1" stop-color="#220000"/></linearGradient></defs><path d="M338 150h253v366H338z" fill="#4d3238"/><path d="M338 144h253v367H338z" fill="#f5361f"/><path d="M349 161h231v334H349z" fill="url(#ac)"/><g fill="none" stroke="#fff"><path stroke-width="6" d="M466 228c-6-18-20-10-18 26 4 66 70 136 88 126 16-34-66-26-116 0-38 24-38 68-18 56 28-20 66-140 64-208z"/><path stroke-width="9" d="M465 262c-6 50-28 116-50 154"/></g><ellipse cx="462" cy="576" rx="8" ry="12" fill="#03040f"/></svg>
      <i class="sep"></i>
      <!-- Documents -->
      <svg class="app" viewBox="735.800 102 285.500 498" preserveAspectRatio="none"><defs><linearGradient id="cu" x1="1" x2="0" y1="0" y2="1"><stop offset="0" stop-color="#d9d9d9"/><stop offset=".35" stop-color="#fff"/></linearGradient></defs><path d="M778 207h201v222H778z" fill="#fff"/><path d="M787 219h184v197H787z" fill="none" stroke="#c6c6c6" stroke-width="3"/><path d="M790 224v188" stroke="#777" stroke-width="3" stroke-dasharray="12 5"/><path d="M792 181h80c30 0 92 50 93 130v207H792z" fill="url(#cu)"/><path d="M872 181c28 6 32 40 31 78 34-4 54 12 62 52-2-20-34-124-93-130z" fill="#f7f7f7" stroke="#ccc" stroke-width="2"/></svg>
      <!-- Trash -->
      <svg class="app" viewBox="1021.200 102 285.500 498" preserveAspectRatio="none"><defs><linearGradient id="tr"><stop offset="0" stop-color="#c3c6cc"/><stop offset=".15" stop-color="#e4e4e4"/><stop offset=".8" stop-color="#dcdcdc"/><stop offset="1" stop-color="#b8bcc5"/></linearGradient></defs><ellipse cx="1163" cy="197" rx="95" ry="34" fill="#a3a7b0" stroke="#e4e7eb" stroke-width="3"/><path d="M1083 180l18-20 32-13 27 24 24-22 26 18 27 10v38l-34 14h-92l-28-18z" fill="#e3e3e3"/><path d="M1092 182l14-16M1100 190l18-24M1112 162l24-8M1214 178l14 6M1218 190l10 12M1208 172l-10 30" stroke="#8d8f94" stroke-width="4"/><path d="M1106 186l26-18 20 16-12 28-26 12zM1176 178l12-24 22 28 6 30-24 10z" fill="#85868c"/><path d="M1127 188l20-7 14 8-18 12z" fill="#41c3ad"/><path d="M1156 196l12 18-9 18-10-6z" fill="#d3592b"/><path d="M1180 186l18-8 12 20-17 12z" fill="#3a64b2"/><path d="M1114 212l20-10 16 24-26 2zM1176 212l16-8 14 20-22 6z" fill="#8a2f2c"/><path d="M1068 202q44 32 95 30 60 0 96-30l-22 270q-4 46-72 46-66 0-70-46z" fill="url(#tr)" opacity=".97"/><path d="M1100 235q60 20 115 5-16 56-60 56-30-2-55-61z" fill="#f1f1f1" opacity=".6"/></svg>
    </div>
    <svg class="rock" width="122" height="166" viewBox="0 0 122 166">
      <defs><filter id="rough2" x="0" y="0" width="1" height="1"><feTurbulence type="fractalNoise" baseFrequency=".04 .03" numOctaves="4" seed="21"/><feDiffuseLighting surfaceScale="8" lighting-color="#5a6176"><feDistantLight azimuth="160" elevation="35"/></feDiffuseLighting></filter></defs>
      <rect width="122" height="166" filter="url(#rough2)"/>
      <path d="M44 26l30 8-18 50-24 34-12 2 14-40z" fill="#6f6868" opacity=".6"/>
      <path d="M86 90l10-30 12 30 10 60-40 8z" fill="#0d1318" opacity=".8"/>
      <path d="M40 146l28-22 6 4-20 26z" fill="#8b8181" opacity=".7"/>
      <rect width="122" height="166" fill="url(#fade)"/>
    </svg>
  </footer>
</div>
</body>
</html>
```
FILE: styles.css
```css
* { box-sizing: border-box; }
html, body { margin: 0; padding: 0; }
body { width: 2880px; height: 1800px; overflow: hidden; background: #000; font-family: "Liberation Sans", Arial, sans-serif; color: #000; }
svg { display: block; flex: none; }

.desktop { width: 2880px; height: 1800px; display: flex; flex-direction: column; overflow: hidden; }

/* Menu bar */
.menubar { height: 46px; flex: none; display: flex; justify-content: space-between; border-bottom: 2px solid #000; background: linear-gradient(90deg, #fbeee2 0, #fcebe3 380px, #feeaea 620px, #fbe4e5 1300px, #f7dfe3 1800px, #f1dee6 2350px, #e7ddee 2880px); font-size: 28.5px; line-height: 44px; letter-spacing: .5px; white-space: nowrap; color: #4a3533; }
.menus { display: grid; padding-left: 42px; grid-template-columns: 66px 147px 82px 88px 98px 131px 185px 129px 141px 80px; }
.status { display: grid; width: 1144px; grid-template-columns: 48px 57px 61px 66px 62px 56px 71px 54px 73px 75px 211px 167px 60px 82px; color: #3c2a33; }
.battery-text { font-size: 25px; letter-spacing: 0; }
.user { font-size: 28px; letter-spacing: 0; }

/* Windows */
.workspace { height: 1588px; flex: none; display: flex; background: #000; }
.behind { width: 10px; margin-bottom: 4px; border-left: 2px solid #000; border-bottom-left-radius: 14px; border-top-left-radius: 8px; background: linear-gradient(90deg, #0000 0, #0000 5px, #0004 8px), linear-gradient(#d5d5d5 0, #c8c8c8 73px, #b8b5b5 90px, #b8b5b5 329px, #96a4a6 330px, #96a4a6 100%); }
.window { flex: 1; position: relative; display: flex; flex-direction: column; background: #fff; border-radius: 9px 9px 0 12px; overflow: hidden; }
.tabstrip { height: 74px; flex: none; display: flex; align-items: flex-start; border-bottom: 1px solid #999; background: linear-gradient(90deg, #dddcda, #dcd8d9 50%, #d9d7d8); box-shadow: inset 0 1px #ebe9e9; }
.lights { display: flex; gap: 16px; padding: 26px 0 0 24px; }
.lights i { width: 24px; height: 24px; border-radius: 50%; border: 1px solid; }
.lights .close { background: #fc605b; border-color: #df4744; }
.lights .min { background: #fdbc40; border-color: #de9f34; }
.lights .max { background: #34c84a; border-color: #27aa35; }
.tab { position: relative; width: 485px; height: 74px; margin-left: 16px; padding: 17px 0 0 38px; display: flex; align-items: center; }
.tab-shape { position: absolute; left: 0; top: 0; }
.doc, .tab-title, .x { position: relative; }
.tab-title { margin-left: 18px; width: 358px; font-size: 24.5px; letter-spacing: .65px; line-height: 30px; }
.newtab { margin: 32px 0 0 -8px; }
.profile { margin: 25px 16px 0 auto; font-size: 24.5px; line-height: 30px; letter-spacing: .05px; }
.toolbar { height: 74px; flex: none; display: flex; align-items: center; padding: 0 14px 0 23px; background: #f1f1f1; border-bottom: 1px solid #b4b3b4; }
.toolbar > svg { margin-right: 28px; }
.toolbar > svg:nth-child(3) { margin-right: 22px; }
.omnibox { width: 2002px; height: 54px; display: flex; align-items: center; padding-left: 13px; background: #fff; border: 1px solid #b5b5b5; border-radius: 7px; }
.url { margin: 1px 0 0 11px; font-size: 28.5px; letter-spacing: .5px; }
.url span { color: #808080; }
.star { margin: 0 13px 0 auto; }
.extensions { display: flex; gap: 24px; margin: -1px 0 0 21px; }
.extensions svg { width: 32px; height: 32px; overflow: visible; }

/* Page */
.page { flex: 1; padding: 40px 11px 0 16px; font-family: "Liberation Serif", "Times New Roman", serif; }
.page h1 { margin: 0; font-size: 48px; line-height: 56px; }
.page hr { margin: 0; height: 4px; border: 0; background: linear-gradient(#9a9a9a 50%, #eee 50%); }
.page h1 + hr { margin-top: 40px; }
.page p { margin: 15px 0 73px; font-size: 32px; line-height: 36px; }
.room { display: block; width: 500px; height: 200px; margin: 0 0 52px; border: 4px solid; border-color: #bfbfc3 #6f6f72 #6f6f72 #bfbfc3; border-radius: 1px; padding: 0; background: #87ceeb; color: #000; font: 22.5px "Liberation Sans", Arial, sans-serif; letter-spacing: .05px; box-shadow: 0 0 0 1px #b5d5fb, 0 0 0 6px #82bdfd, 0 0 0 8px #c9e2fe; }
.page pre { margin: 28px 0 0; font: 26px/30px "Liberation Mono", "Courier New", monospace; }
.dock-shadow { position: absolute; left: 70px; right: 60px; bottom: 0; height: 90px; background: linear-gradient(#0000, #00000008 35%, #00000014 95%, #00000038); -webkit-mask: linear-gradient(90deg, #0000, #0005 40px, #000 120px, #000 calc(100% - 120px), #0005 calc(100% - 40px), #0000); }

/* Dock */
.dock-area { height: 166px; flex: none; display: flex; }
.dock { width: 2636px; display: flex; align-items: stretch; padding-left: 7px; border-radius: 10px 10px 0 0; background: radial-gradient(ellipse 400px 150px at 1960px 160px, #9aa1c5cc, #9aa1c500), radial-gradient(ellipse 330px 110px at 510px 166px, #9a9ab4bb, #9a9ab400), radial-gradient(ellipse 400px 100px at 1300px 166px, #8b899f99, #8b899f00), linear-gradient(#626268, #6a6a74 35%, #777a89); box-shadow: inset 0 1px #77777a; }
.app { width: 142px; height: 166px; overflow: visible; }
.sep { width: 2px; height: 122px; margin: 22px 30px 0 33px; background: #434653; flex: none; }

/* Lettering inside icons */
.glyph { font-family: "Liberation Sans", Arial, sans-serif; }
.glyph-bold { font-family: "Open Sans", "Liberation Sans", sans-serif; font-weight: 700; }
.glyph-light { font-family: "Open Sans", "Liberation Sans", sans-serif; font-weight: 300; }
.glyph-round { font-family: Inter, "Liberation Sans", sans-serif; font-weight: 700; }
.glow { filter: drop-shadow(0 0 5px #ffae5a); }
```
